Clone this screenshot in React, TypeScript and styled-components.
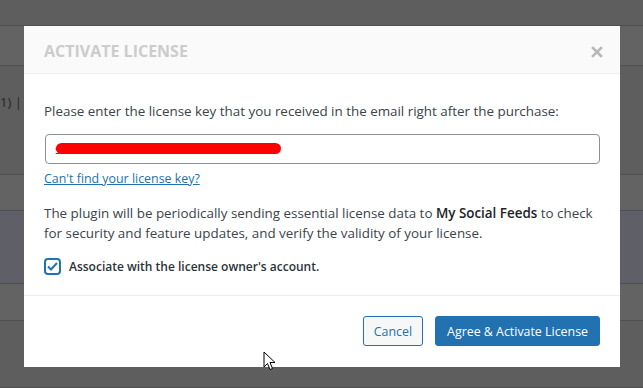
import React from "react";
import styled, { createGlobalStyle } from "styled-components";

const Global = createGlobalStyle`
  html, body { margin: 0; padding: 0; }
  body { width: 643px; height: 388px; overflow: hidden; font-family: "Open Sans", "Noto Sans", sans-serif; }
  * { box-sizing: border-box; }
`;

const Stage = styled.div`
  display: grid;
  width: 643px;
  height: 388px;
  overflow: hidden;
  & > * { grid-area: 1 / 1; }
`;

const Backdrop = styled.div`
  display: flex;
  flex-direction: column;
  background: #5e5e5e;
`;

const Band = styled.div<{ $h: number; $bg: string }>`
  height: ${(p) => p.$h}px;
  flex: none;
  background: ${(p) => p.$bg};
  border-bottom: 1px solid #4f4f4f;
  display: flex;
  align-items: flex-start;
  font-family: "Open Sans", sans-serif;
  font-size: 13px;
  color: #262626;
  overflow: hidden;
`;

const BgText = styled.span`
  margin-top: 27px;
  margin-left: 0;
  white-space: nowrap;
`;

const Layer = styled.div`
  display: flex;
  flex-direction: column;
  align-items: flex-start;
  padding: 26px 0 0 24px;
  position: relative;
`;

const Modal = styled.div`
  width: 596px;
  height: 341px;
  background: #fff;
  display: flex;
  flex-direction: column;
  font-family: "Open Sans", "Noto Sans", sans-serif;
  color: #3c434a;
`;

const Header = styled.div`
  height: 48px;
  flex: none;
  background: #fafafa;
  border-bottom: 1px solid #eeeeee;
  display: flex;
  align-items: center;
  justify-content: space-between;
  padding: 0 17px 0 20px;
`;

const Title = styled.h2`
  margin: 0;
  font-size: 16px;
  font-weight: 700;
  color: #cccccc;
  letter-spacing: 0;
  padding-top: 2px;
`;

const Close = styled.span`
  display: flex;
  width: 12px;
  height: 12px;
  margin-top: 4px;
`;

const Body = styled.div`
  flex: none;
  height: 222px;
  border-bottom: 1px solid #eeeeee;
  padding: 26px 20px 0 20px;
  display: flex;
  flex-direction: column;
`;

const Text = styled.p`
  margin: 0;
  font-size: 13.4px;
  line-height: 22px;
  color: #3c434a;
`;

const InputWrap = styled.div`
  position: relative;
  margin-top: 12px;
  margin-left: 1px;
  width: 555px;
`;

const KeyInput = styled.input`
  display: block;
  width: 100%;
  height: 30px;
  border: 1px solid #8c8f94;
  border-radius: 4px;
  padding: 0 9px;
  font-family: inherit;
  font-size: 13px;
  color: #2c3338;
  background: #fff;
  outline: none;
`;

const Redaction = styled.span`
  position: absolute;
  left: 11px;
  top: 9px;
  width: 225px;
  height: 11px;
  border-radius: 6px;
  background: #ff0000;
  pointer-events: none;
`;

const Link = styled.a`
  margin-top: 6px;
  font-size: 12.4px;
  line-height: 17px;
  color: #2271b1;
  text-decoration: underline;
  align-self: flex-start;
`;

const Para = styled(Text)`
  margin-top: 16px;
  line-height: 20px;
  strong { font-weight: 600; color: #1d2327; }
`;

const CheckRow = styled.label`
  margin-top: 15px;
  display: flex;
  align-items: center;
  gap: 8px;
  font-size: 12px;
  font-weight: 600;
  color: #2c3338;
`;

const Box = styled.span`
  width: 17px;
  height: 17px;
  border: 2px solid #2271b1;
  border-radius: 4px;
  display: flex;
  align-items: center;
  justify-content: center;
  background: #fff;
`;

const Footer = styled.div`
  flex: 1;
  display: flex;
  justify-content: flex-end;
  align-items: flex-start;
  gap: 12px;
  padding: 20px 20px 0 0;
`;

const Button = styled.button<{ $primary?: boolean }>`
  height: 30px;
  padding: 0 ${(p) => (p.$primary ? 11 : 10)}px;
  border-radius: 3px;
  border: 1px solid #2271b1;
  background: ${(p) => (p.$primary ? "#2271b1" : "#f6f7f7")};
  color: ${(p) => (p.$primary ? "#ffffff" : "#2271b1")};
  font-family: "Open Sans", "Noto Sans", sans-serif;
  font-size: 12.4px;
  cursor: pointer;
`;

const Cursor = styled.svg`
  position: absolute;
  left: 263px;
  top: 351px;
`;

export default function App() {
  return (
    <>
      <Global />
      <Stage>
        <Backdrop>
          <Band $h={26} $bg="#5e5e5e" />
          <Band $h={40} $bg="#636363" />
          <Band $h={109} $bg="#5e5e5e">
            <BgText>1) |</BgText>
          </Band>
          <Band $h={36} $bg="#636363" />
          <Band $h={73} $bg="#5f6067" />
          <Band $h={37} $bg="#636363" />
          <Band $h={67} $bg="#5e5e5e" />
        </Backdrop>
        <Layer>
          <Modal>
            <Header>
              <Title>ACTIVATE LICENSE</Title>
              <Close>
                <svg width="12" height="12" viewBox="0 0 12 12">
                  <path d="M2 2 L10 10 M10 2 L2 10" stroke="#b8b8b8" strokeWidth="2.6" strokeLinecap="square" />
                </svg>
              </Close>
            </Header>
            <Body>
              <Text>Please enter the license key that you received in the email right after the purchase:</Text>
              <InputWrap>
                <KeyInput defaultValue="s" readOnly />
                <Redaction />
              </InputWrap>
              <Link href="#">Can't find your license key?</Link>
              <Para>
                The plugin will be periodically sending essential license data to <strong>My Social Feeds</strong> to check
                for security and feature updates, and verify the validity of your license.
              </Para>
              <CheckRow>
                <Box>
                  <svg width="11" height="9" viewBox="0 0 11 9">
                    <path d="M1 4.5 L4 7.5 L10 1" fill="none" stroke="#2271b1" strokeWidth="2" />
                  </svg>
                </Box>
                Associate with the license owner's account.
              </CheckRow>
            </Body>
            <Footer>
              <Button>Cancel</Button>
              <Button $primary>Agree &amp; Activate License</Button>
            </Footer>
          </Modal>
          <Cursor width="13" height="21" viewBox="0 0 13 21">
            <path d="M1 1 L1 16 L4.5 12.5 L7 18.5 L9.5 17.5 L7 11.5 L12 11.5 Z" fill="#ffffff" stroke="#000" strokeWidth="1" strokeLinejoin="round" />
          </Cursor>
        </Layer>
      </Stage>
    </>
  );
}
